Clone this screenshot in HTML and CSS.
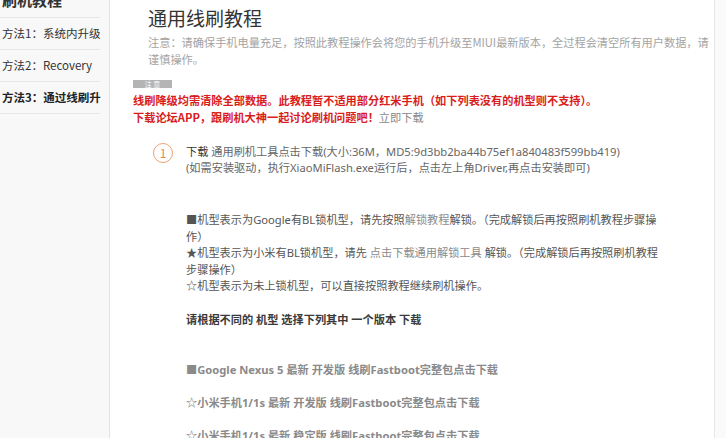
FILE: index.html
```html
<!DOCTYPE html>
<html lang="zh-CN">
<head>
<meta charset="utf-8">
<title>通用线刷教程</title>
<link rel="stylesheet" href="styles.css">
</head>
<body>
<div class="page">
  <aside class="sidebar">
    <div class="side-title">刷机教程</div>
    <ul class="side-menu">
      <li>方法1：系统内升级</li>
      <li>方法2：Recovery</li>
      <li class="active">方法3：<span class="u">通过线刷升</span></li>
    </ul>
  </aside>
  <main class="main">
    <div class="head">
      <h1 class="title">通用线刷教程</h1>
      <p class="note">注意：请确保手机电量充足，按照此教程操作会将您的手机升级至MIUI最新版本，全过程会清空所有用户数据，请<br>谨慎操作。</p>
    </div>
    <div class="badge">注 意</div>
    <p class="warn">线刷降级均需清除全部数据。此教程暂不适用部分红米手机（如下列表没有的机型则不支持）。<br>下载论坛APP，跟刷机大神一起讨论刷机问题吧！<span class="link">立即下载</span></p>
    <div class="step">
      <div class="num">1</div>
      <div class="step-body">
        <p class="step-text"><span class="dark">下载</span> 通用刷机工具点击下载(大小:36M，MD5:9d3bb2ba44b75ef1a840483f599bb419)<br>(如需安装驱动，执行XiaoMiFlash.exe运行后，点击左上角Driver,再点击安装即可)</p>
        <p class="bullets">■机型表示为Google有BL锁机型，请先按照<span class="lt">解锁教程</span>解锁。（完成解锁后再按照刷机教程步骤操<br>作）<br>★机型表示为小米有BL锁机型，请先 <span class="lt">点击下载通用解锁工具</span> 解锁。（完成解锁后再按照刷机教程<br>步骤操作）<br>☆机型表示为未上锁机型，可以直接按照教程继续刷机操作。</p>
        <p class="prompt">请根据不同的 机型 选择下列其中 一个版本 下载</p>
        <ul class="downloads">
          <li>■Google Nexus 5 最新 开发版 线刷Fastboot完整包点击下载</li>
          <li>☆小米手机1/1s 最新 开发版 线刷Fastboot完整包点击下载</li>
          <li>☆小米手机1/1s 最新 稳定版 线刷Fastboot完整包点击下载</li>
        </ul>
      </div>
    </div>
  </main>
  <div class="rest"></div>
</div>
</body>
</html>
```

FILE: styles.css
```css
html, body {
  margin: 0;
  padding: 0;
  height: 100%;
  overflow: hidden;
  background: #ffffff;
}
body {
  font-family: "Noto Sans CJK SC", "Noto Sans", sans-serif;
  font-size: 11.2px;
  color: #555;
}
p { margin: 0; }
ul { margin: 0; padding: 0; list-style: none; }

.page {
  display: flex;
  height: 438px;
}

.sidebar {
  width: 109px;
  flex: none;
  background: #f8f8f8;
  border-right: 1px solid #e4e4e4;
}
.side-title {
  margin-top: -10px;
  padding: 0 0 7px 2px;
  line-height: 20px;
  font-size: 15px;
  font-weight: bold;
  color: #333;
  width: 98px;
  border-bottom: 1px solid #e6e6e6;
}
.side-menu li {
  width: 98px;
  height: 31px;
  line-height: 31px;
  padding-left: 2px;
  border-bottom: 1px solid #e6e6e6;
  font-size: 11.5px;
  color: #333;
  white-space: nowrap;
}
.side-menu li.active {
  font-weight: bold;
  color: #222;
}

.main {
  width: 605px;
  flex: none;
  background: #fff;
  border-right: 1px solid #e6e6e6;
  padding-left: 23px;
  box-sizing: border-box;
  white-space: nowrap;
}
.rest {
  flex: 1;
  background: #fafafa;
}

.head {
  padding-left: 15px;
}
.title {
  margin: 4px 0 0;
  font-size: 19px;
  line-height: 28px;
  font-weight: normal;
  color: #333;
}
.note {
  margin-top: 2px;
  line-height: 17px;
  color: #a3a3a3;
}

.badge {
  margin-top: 12px;
  width: 39px;
  height: 8px;
  line-height: 8px;
  background: #b4b4b4;
  color: #fff;
  font-size: 7px;
  text-align: center;
}
.warn {
  margin-top: 4px;
  line-height: 16.5px;
  color: #d91c1c;
  font-weight: bold;
}
.warn .link {
  color: #888;
  font-weight: normal;
}

.step {
  display: flex;
  gap: 13px;
  margin-top: 18px;
  padding-left: 20px;
}
.num {
  flex: none;
  width: 18px;
  height: 18px;
  border: 1.5px solid #eaa276;
  border-radius: 50%;
  color: #e58a50;
  font-size: 12px;
  line-height: 18px;
  text-align: center;
}
.step-body {
  width: 500px;
  font-family: "Noto Sans", "Noto Sans CJK SC", sans-serif;
}
.step-text {
  margin-top: 1px;
  line-height: 16px;
  color: #666;
}
.step-text .dark { color: #333; }
.bullets {
  margin-top: 36px;
  line-height: 16.5px;
  color: #555;
}
.bullets .lt { color: #8a8a8a; }
.prompt {
  margin-top: 17px;
  line-height: 16px;
  font-weight: bold;
  color: #3a3a3a;
}
.downloads {
  margin-top: 25px;
}
.downloads li {
  line-height: 33px;
  font-size: 11.2px;
  font-weight: bold;
  color: #8a8a8a;
}
```
